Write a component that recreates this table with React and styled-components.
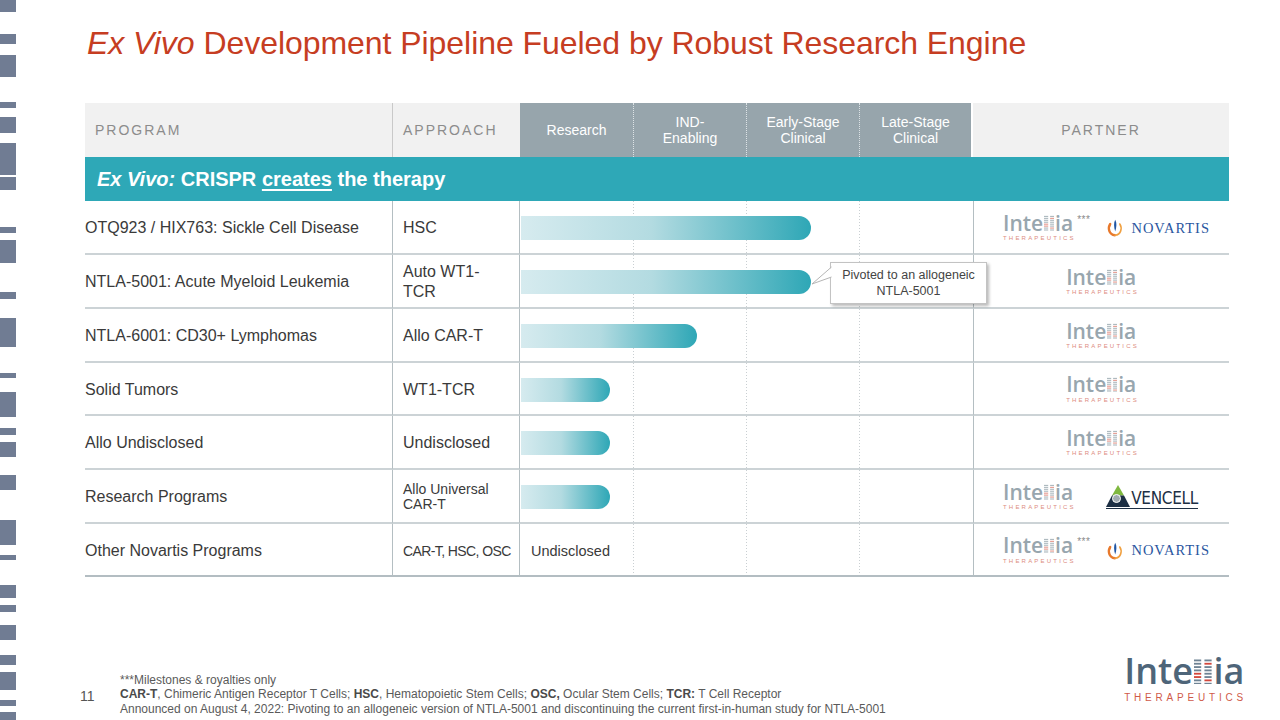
import React from 'react';
import styled, { createGlobalStyle } from 'styled-components';

const Global = createGlobalStyle`
  html, body { margin: 0; padding: 0; width: 1280px; height: 720px; overflow: hidden; background: #fff; }
  body { font-family: "Liberation Sans", Arial, sans-serif; }
  * { box-sizing: border-box; }
`;

const Page = styled.div`
  display: flex;
  width: 1280px;
  height: 720px;
  background: #fff;
`;

const Strip = styled.div`
  display: flex;
  flex-direction: column;
  width: 16px;
  flex: none;
  height: 720px;
  overflow: hidden;
`;

const Mark = styled.div`
  flex: none;
  width: 16px;
  height: ${p => p.$h}px;
  margin-top: ${p => p.$gap}px;
  background: #707c93;
`;

const Main = styled.div`
  flex: 1;
  display: flex;
  flex-direction: column;
  height: 720px;
`;

const Title = styled.h1`
  margin: 25px 0 0 71px;
  font: 400 32px/36px "Liberation Sans", Arial, sans-serif;
  color: #c63d22;
  white-space: nowrap;
  letter-spacing: -0.05px;
  em { font-style: italic; }
`;

const Table = styled.div`
  display: grid;
  grid-template-columns: 308px 127px 114px 113px 113px 113px 256px;
  grid-template-rows: 54px 44px 54px 54px 54px 53px 54px 54px 53px;
  width: 1144px;
  margin: 42px 0 0 69px;
`;

const HeadLabel = styled.div`
  display: flex;
  align-items: center;
  justify-content: ${p => (p.$center ? 'center' : 'flex-start')};
  padding-left: ${p => (p.$center ? 0 : 10)}px;
  background: #f1f1f1;
  color: #8c8c8c;
  font-size: 14px;
  letter-spacing: 2px;
  border-right: ${p => (p.$divider ? '1px solid #c9c9c9' : 'none')};
`;

const PhaseHead = styled.div`
  display: flex;
  align-items: center;
  justify-content: center;
  text-align: center;
  background: #97a5ac;
  color: #fff;
  font-size: 14px;
  line-height: 16px;
  border-right: ${p => (p.$last ? 'none' : '1px dotted #dde3e6')};
  margin-right: ${p => (p.$last ? 2 : 0)}px;
`;

const Band = styled.div`
  grid-column: 1 / -1;
  display: flex;
  align-items: center;
  padding-left: 12px;
  background: #2ea8b7;
  color: #fff;
  font-size: 20px;
  font-weight: 700;
  white-space: pre;
  em { font-style: italic; }
  u { text-decoration: underline; text-underline-offset: 3px; text-decoration-thickness: 1.5px; }
`;

const BodyCell = styled.div`
  display: flex;
  align-items: center;
  padding-top: 2px;
  border-bottom: ${p => (p.$lastRow ? '2px solid #b3bdc2' : '2px solid #ccd3d6')};
  color: #3a3a3a;
  font-size: 16px;
`;

const ProgramCell = styled(BodyCell)`
  border-right: 1px solid #b4bec2;
`;

const ApproachCell = styled(BodyCell)`
  padding-left: 10px;
  border-right: 1px solid #b4bec2;
  font-size: ${p => p.$fs || 16}px;
  line-height: ${p => p.$lh || 20}px;
  letter-spacing: ${p => p.$ls || 0}px;
  white-space: nowrap;
`;

const StageCell = styled(BodyCell)`
  grid-column: span 4;
  position: relative;
  padding-left: ${p => (p.$text ? 11 : 1)}px;
  font-size: 14.5px;
  background-image:
    linear-gradient(#c9cfd2 50%, transparent 50%),
    linear-gradient(#c9cfd2 50%, transparent 50%),
    linear-gradient(#c9cfd2 50%, transparent 50%);
  background-size: 1px 3px;
  background-repeat: repeat-y;
  background-position: 113px 0, 226px 0, 339px 0;
`;

const Bar = styled.div`
  height: 24px;
  border-radius: 0 12px 12px 0;
  background: linear-gradient(90deg, #d6ebef 0%, #b3dbe1 45%, #2ea7b6 100%);
`;

const Callout = styled.div`
  position: absolute;
  z-index: 3;
  left: 310px;
  top: 7px;
  width: 157px;
  height: 42px;
  background: #fff;
  border: 1px solid #c3c3c3;
  box-shadow: 2px 2px 3px rgba(0, 0, 0, 0.28);
  display: flex;
  align-items: center;
  justify-content: center;
  text-align: center;
  font-size: 12.5px;
  line-height: 16px;
  color: #444;
`;

const Pointer = styled.svg`
  position: absolute;
  left: -20px;
  top: 0;
  overflow: visible;
`;

const PartnerCell = styled(BodyCell)`
  border-left: 1px solid #b4bec2;
  justify-content: ${p => (p.$pair ? 'space-between' : 'center')};
  padding: ${p => (p.$pair ? `2px ${p.$pr}px 0 29px` : '2px 0 0 2px')};
`;

const LogoWrap = styled.div`
  display: inline-flex;
  flex-direction: column;
  align-items: flex-start;
`;

const Word = styled.div`
  font-family: "Open Sans", "Liberation Sans", sans-serif;
  font-weight: 600;
  font-size: ${p => p.$size}px;
  line-height: 0.8;
  color: ${p => p.$color};
  white-space: nowrap;
  svg { vertical-align: baseline; margin: 0 ${p => p.$size * 0.05}px 0 ${p => p.$size * 0.03}px; }
`;

const Stars = styled.span`
  font-family: "Liberation Sans", Arial, sans-serif;
  font-weight: 400;
  font-size: 10px;
  line-height: 1;
  color: #8a8a8a;
  vertical-align: top;
  margin-left: 4px;
  letter-spacing: 0.5px;
`;

const Tagline = styled.div`
  font-family: "Liberation Sans", Arial, sans-serif;
  font-size: ${p => p.$size}px;
  letter-spacing: ${p => p.$ls}px;
  line-height: 1;
  color: ${p => p.$color};
  margin-top: ${p => p.$mt}px;
  white-space: nowrap;
`;

const Novartis = styled.div`
  display: flex;
  align-items: center;
  gap: 7px;
`;

const NovartisText = styled.span`
  font-family: "Liberation Serif", "Times New Roman", serif;
  font-size: 14.5px;
  letter-spacing: 1px;
  color: #2a56a0;
`;

const Avencell = styled.div`
  display: flex;
  align-items: flex-end;
  border-bottom: 1.5px solid #1d2f44;
  padding-bottom: 1px;
`;

const AvencellText = styled.span`
  font-family: "Liberation Sans Narrow", "DejaVu Sans Condensed", "Liberation Sans", sans-serif;
  font-stretch: condensed;
  font-size: 17px;
  line-height: 17px;
  color: #1d2f44;
  letter-spacing: -0.3px;
  margin-left: 1px;
`;

const Footer = styled.div`
  margin-top: auto;
  display: flex;
  align-items: flex-end;
  padding: 0 33px 4px 64px;
`;

const PageNum = styled.div`
  font-size: 14px;
  line-height: 16px;
  color: #555;
  margin-bottom: 12px;
  width: 40px;
  flex: none;
`;

const Notes = styled.div`
  flex: 1;
  font-size: 12px;
  line-height: 14.5px;
  color: #5a5a5a;
  white-space: nowrap;
  b { color: #4a4a4a; }
`;

const BottomLogo = styled.div`
  margin-bottom: 13px;
`;

/* ---------- drawings ---------- */

function Ladder({ h, col, gray, red, redA, redB }) {
  const n = 8;
  const step = h / n;
  const dh = step * 0.55;
  const gap = col * 0.45;
  const w = col * 2 + gap;
  const rects = [];
  for (let i = 0; i < n; i++) {
    const y = i * step + (step - dh);
    rects.push(<rect key={'a' + i} x={0} y={y} width={col} height={dh} fill={redA.includes(i) ? red : gray} />);
    rects.push(<rect key={'b' + i} x={col + gap} y={y} width={col} height={dh} fill={redB.includes(i) ? red : gray} />);
  }
  return (
    <svg width={w} height={h} viewBox={`0 0 ${w} ${h}`}>
      {rects}
    </svg>
  );
}

function Intellia({ size, color, stripeGray, stripeRed, tagSize, tagLs, tagColor, tagMt, stars }) {
  return (
    <LogoWrap>
      <Word $size={size} $color={color}>
        Inte
        <Ladder h={size * 0.74} col={size * 0.2} gray={stripeGray} red={stripeRed} redA={[4, 5]} redB={[1, 6]} />
        ia
        {stars && <Stars>***</Stars>}
      </Word>
      <Tagline $size={tagSize} $ls={tagLs} $color={tagColor} $mt={tagMt}>THERAPEUTICS</Tagline>
    </LogoWrap>
  );
}

const PartnerIntellia = ({ stars }) => (
  <Intellia
    size={21}
    color="#98a6ae"
    stripeGray="#aab6bc"
    stripeRed="#e3958a"
    tagSize={6}
    tagLs={2.2}
    tagColor="#dd8c80"
    tagMt={4}
    stars={stars}
  />
);

function NovartisLogo() {
  return (
    <Novartis>
      <svg width="18" height="18" viewBox="0 0 18 18">
        <path d="M4.2 5 C1.6 9 2.8 15.6 9 16.2" stroke="#e8792c" strokeWidth="2.4" fill="none" strokeLinecap="round" />
        <path d="M13.8 5 C16.4 9 15.2 15.6 9 16.2" stroke="#f0a040" strokeWidth="1.6" fill="none" strokeLinecap="round" />
        <path d="M9.2 0.8 C11 4 10.6 8 9.2 12.5 C7.8 8 7.6 4 9.2 0.8 Z" fill="#1f55a4" />
      </svg>
      <NovartisText>NOVARTIS</NovartisText>
    </Novartis>
  );
}

function AvencellLogo() {
  return (
    <Avencell>
      <svg width="24" height="22" viewBox="0 0 24 22">
        <polygon points="12,0 6,10.5 18,10.5" fill="#7fb83f" />
        <polygon points="6,10.5 18,10.5 24,22 0,22" fill="#1d2f44" />
        <circle cx="10.5" cy="13.5" r="4" fill="#a0aab0" stroke="#fff" strokeWidth="1" />
      </svg>
      <AvencellText>VENCELL</AvencellText>
    </Avencell>
  );
}

/* ---------- data ---------- */

const marks = [
  [0, 12], [34, 44], [55, 77], [102, 108], [117, 133], [143, 175], [177, 190], [227, 233],
  [240, 263], [292, 299], [318, 347], [373, 378], [392, 417], [428, 435], [442, 457],
  [475, 490], [520, 545], [555, 560], [585, 598], [605, 612], [625, 640], [655, 665],
  [672, 690], [700, 706], [712, 720],
];

const phases = [
  'Research',
  <>IND-<br />Enabling</>,
  <>Early-Stage<br />Clinical</>,
  <>Late-Stage<br />Clinical</>,
];

const rows = [
  { program: 'OTQ923 / HIX763: Sickle Cell Disease', approach: 'HSC', bar: 290, partner: 'novartis' },
  { program: 'NTLA-5001: Acute Myeloid Leukemia', approach: <>Auto WT1-<br />TCR</>, bar: 290, callout: true, partner: 'intellia' },
  { program: 'NTLA-6001: CD30+ Lymphomas', approach: 'Allo CAR-T', bar: 176, partner: 'intellia' },
  { program: 'Solid Tumors', approach: 'WT1-TCR', bar: 89, partner: 'intellia' },
  { program: 'Allo Undisclosed', approach: 'Undisclosed', bar: 89, partner: 'intellia' },
  { program: 'Research Programs', approach: <>Allo Universal<br />CAR-T</>, fs: 14, lh: 15, bar: 89, partner: 'avencell' },
  { program: 'Other Novartis Programs', approach: 'CAR-T, HSC, OSC', fs: 14, ls: -0.6, text: 'Undisclosed', partner: 'novartis' },
];

function Partners({ kind, last }) {
  if (kind === 'novartis') {
    return (
      <PartnerCell $pair $pr={19} $lastRow={last}>
        <PartnerIntellia stars />
        <NovartisLogo />
      </PartnerCell>
    );
  }
  if (kind === 'avencell') {
    return (
      <PartnerCell $pair $pr={31} $lastRow={last}>
        <PartnerIntellia />
        <AvencellLogo />
      </PartnerCell>
    );
  }
  return (
    <PartnerCell $lastRow={last}>
      <PartnerIntellia />
    </PartnerCell>
  );
}

export default function App() {
  return (
    <>
      <Global />
      <Page>
        <Strip>
          {marks.map(([t, b], i) => (
            <Mark key={i} $h={b - t} $gap={i === 0 ? t : t - marks[i - 1][1]} />
          ))}
        </Strip>
        <Main>
          <Title>
            <em>Ex Vivo</em> Development Pipeline Fueled by Robust Research Engine
          </Title>
          <Table>
            <HeadLabel $divider>PROGRAM</HeadLabel>
            <HeadLabel>APPROACH</HeadLabel>
            {phases.map((p, i) => (
              <PhaseHead key={i} $last={i === 3}>{p}</PhaseHead>
            ))}
            <HeadLabel $center>PARTNER</HeadLabel>
            <Band>
              <em>Ex Vivo:</em> CRISPR <u>creates</u> the therapy
            </Band>
            {rows.map((r, i) => {
              const last = i === rows.length - 1;
              return (
                <React.Fragment key={i}>
                  <ProgramCell $lastRow={last}>{r.program}</ProgramCell>
                  <ApproachCell $lastRow={last} $fs={r.fs} $lh={r.lh} $ls={r.ls}>
                    <div>{r.approach}</div>
                  </ApproachCell>
                  <StageCell $lastRow={last} $text={!!r.text}>
                    {r.bar ? <Bar style={{ width: r.bar }} /> : r.text}
                    {r.callout && (
                      <Callout>
                        <Pointer width="21" height="24" viewBox="0 0 21 24">
                          <polygon points="21,4 1,21 21,14" fill="#fff" />
                          <polyline points="20.5,4 1,21 20.5,14" fill="none" stroke="#b5b5b5" strokeWidth="1" />
                        </Pointer>
                        <div>
                          Pivoted to an allogeneic
                          <br />
                          NTLA-5001
                        </div>
                      </Callout>
                    )}
                  </StageCell>
                  <Partners kind={r.partner} last={last} />
                </React.Fragment>
              );
            })}
          </Table>
          <Footer>
            <PageNum>11</PageNum>
            <Notes>
              <div>***Milestones &amp; royalties only</div>
              <div>
                <b>CAR-T</b>, Chimeric Antigen Receptor T Cells; <b>HSC</b>, Hematopoietic Stem Cells; <b>OSC,</b> Ocular Stem
                Cells; <b>TCR:</b> T Cell Receptor
              </div>
              <div>
                Announced on August 4, 2022: Pivoting to an allogeneic version of NTLA-5001 and discontinuing the current
                first-in-human study for NTLA-5001
              </div>
            </Notes>
            <BottomLogo>
              <Intellia
                size={36}
                color="#4e6579"
                stripeGray="#6f8394"
                stripeRed="#d2473c"
                tagSize={10}
                tagLs={3.8}
                tagColor="#cf5a49"
                tagMt={7}
              />
            </BottomLogo>
          </Footer>
        </Main>
      </Page>
    </>
  );
}
